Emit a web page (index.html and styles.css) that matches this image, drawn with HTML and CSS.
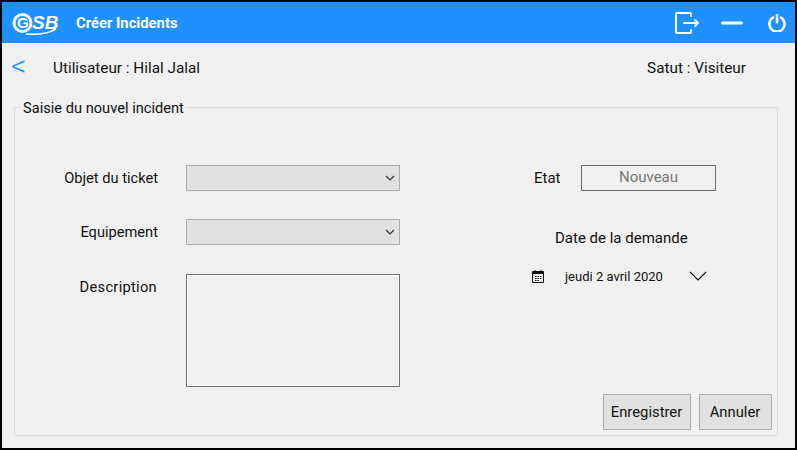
FILE: index.html
```html
<!DOCTYPE html>
<html lang="fr">
<head>
<meta charset="utf-8">
<title>Créer Incidents</title>
<link rel="stylesheet" href="styles.css">
</head>
<body>
<div class="window">
  <header class="titlebar">
    <div class="brand">
      <svg class="logo" width="46" height="26" viewBox="0 0 46 26" fill="none" stroke="#fff">
        <circle cx="10.500" cy="12" r="8.500" stroke-width="3"/>
        <text x="5" y="17" class="logo-g">G</text>
        <path d="M14 23c11 1 23-1 30-5" stroke-width="1.500"/>
        <text x="20" y="18" class="logo-text">SB</text>
      </svg>
      <span class="title">Créer Incidents</span>
    </div>
    <div class="actions">
      <svg width="26" height="24" viewBox="0 0 26 24" fill="none" stroke="#fff" stroke-width="2" stroke-linecap="round" stroke-linejoin="round">
        <path d="M17 5V3a1 1 0 0 0-1-1H3a1 1 0 0 0-1 1v18a1 1 0 0 0 1 1h13a1 1 0 0 0 1-1v-2"/>
        <path d="M10 12h14M21 9l3 3-3 3"/>
      </svg>
      <svg width="22" height="4" viewBox="0 0 22 4"><rect width="22" height="3" y="0.500" rx="1.500" fill="#fff"/></svg>
      <svg width="18" height="18" viewBox="0 0 18 18" fill="none" stroke="#fff" stroke-width="2.600" stroke-linecap="round">
        <path d="M5 3.600a7.600 7.600 0 1 0 8 0"/>
        <path d="M9 1.200v7"/>
      </svg>
    </div>
  </header>
  <div class="userbar">
    <span class="back">&lt;</span>
    <span class="user">Utilisateur : Hilal Jalal</span>
    <span class="status">Satut : Visiteur</span>
  </div>
  <section class="group">
    <h2 class="legend">Saisie du nouvel incident</h2>
    <div class="columns">
      <div class="form-left">
        <label class="field-label">Objet du ticket</label>
        <div class="combo"><svg width="10" height="6" viewBox="0 0 10 6" fill="none" stroke="#333" stroke-width="1.200"><path d="M1 1l4 4 4-4"/></svg></div>
        <label class="field-label">Equipement</label>
        <div class="combo"><svg width="10" height="6" viewBox="0 0 10 6" fill="none" stroke="#333" stroke-width="1.200"><path d="M1 1l4 4 4-4"/></svg></div>
        <label class="field-label desc-label">Description</label>
        <div class="textarea"></div>
      </div>
      <div class="form-right">
        <div class="state-row">
          <span class="state-label">Etat</span>
          <span class="state-box">Nouveau</span>
        </div>
        <div class="date-label">Date de la demande</div>
        <div class="date-row">
          <svg class="cal" width="14" height="14" viewBox="0 0 14 14" fill="none" stroke="#111">
            <path d="M1.500 2.500h11v11h-11z"/>
            <path d="M1.500 4h11" stroke-width="2"/>
            <path d="M4 1v2M10 1v2"/>
            <path d="M4 7.500h1.500M6.500 7.500H8M9 7.500h1.500M4 9.500h1.500M6.500 9.500H8M9 9.500h1.500M4 11.500h1.500M6.500 11.500H8"/>
          </svg>
          <span class="date-text">jeudi 2 avril 2020</span>
          <svg width="18" height="10" viewBox="0 0 18 10" fill="none" stroke="#111" stroke-width="1.100"><path d="M1 1l8 8 8-8"/></svg>
        </div>
      </div>
    </div>
    <div class="buttons">
      <button class="btn btn-save">Enregistrer</button>
      <button class="btn btn-cancel">Annuler</button>
    </div>
  </section>
</div>
</body>
</html>
```

FILE: styles.css
```css
* { box-sizing: border-box; }
html, body { margin: 0; padding: 0; }
body { width: 797px; height: 450px; overflow: hidden; font-family: Roboto, "Liberation Sans", sans-serif; color: #111; }
.window { width: 797px; height: 450px; border: 2px solid #000; background: #f0f0f0; display: flex; flex-direction: column; }
.titlebar { height: 41px; flex: none; background: #1e90ff; display: flex; align-items: center; justify-content: space-between; padding: 0 9px 0 10px; color: #fff; }
.brand { display: flex; align-items: center; gap: 18px; }
.logo { display: block; margin-top: 2px; }
.logo-g { font-family: "Liberation Sans", sans-serif; font-weight: 700; font-size: 15px; fill: #fff; stroke: none; }
.logo-text { font-family: "Liberation Sans", sans-serif; font-style: italic; font-weight: 700; font-size: 19px; fill: #fff; stroke: none; }
.title { font-size: 14.800px; font-weight: 700; }
.actions { display: flex; align-items: center; gap: 0; }
.actions svg { display: block; }
.actions svg:nth-child(2) { margin-left: 21px; }
.actions svg:nth-child(3) { margin-left: 25px; }
.userbar { height: 50px; flex: none; display: flex; align-items: center; font-size: 15.300px; padding: 0 49px 0 9px; }
.back { font-size: 30px; font-weight: 300; color: #1e90ff; width: 42px; line-height: 1; position: relative; top: -2px; }
.user { flex: 1; }
.group { margin: 14px 17px 12px 12px; flex: 1; border: 1px solid #dcdcdc; position: relative; display: flex; flex-direction: column; }
.legend { position: absolute; left: 6px; top: -8px; margin: 0; padding: 0 2px; background: #f0f0f0; font-size: 14.650px; font-weight: 400; line-height: 16px; }
.columns { display: flex; padding-top: 57px; }
.form-left { width: 385px; display: grid; grid-template-columns: 143px 214px; column-gap: 28px; row-gap: 28px; grid-template-rows: 26px 26px 113px; font-size: 14.650px; }
.field-label { text-align: right; line-height: 24px; padding-top: 1px; }
.desc-label { padding-right: 1px; padding-top: 2px; letter-spacing: 0.300px; }
.combo { background: #e1e1e1; border: 1px solid #adadad; display: flex; align-items: center; justify-content: flex-end; padding-right: 4px; }
.textarea { background: #f0f0f0; border: 1px solid #707070; box-shadow: inset 0 0 0 1px #fff; margin-top: 1px; height: 113px; }
.form-right { padding-left: 134px; font-size: 15px; }
.state-row { display: flex; align-items: center; height: 26px; }
.state-label { width: 47px; }
.state-box { width: 135px; height: 26px; border: 1px solid #707070; color: #777; text-align: center; line-height: 22px; }
.date-label { margin: 36px 0 0 21px; line-height: 22px; }
.date-row { display: flex; align-items: center; margin: 16px 0 0 -3px; height: 22px; font-size: 13px; }
.cal { margin-right: 20px; }
.date-text { width: 124px; }
.buttons { margin-top: auto; display: flex; justify-content: flex-end; gap: 8px; padding: 0 5px 5px 0; }
.btn { font: inherit; font-size: 14.800px; color: #111; height: 36px; background: #e1e1e1; border: 1px solid #adadad; padding: 0 1px 0 0; }
.btn-save { width: 88px; }
.btn-cancel { width: 73px; }
```
